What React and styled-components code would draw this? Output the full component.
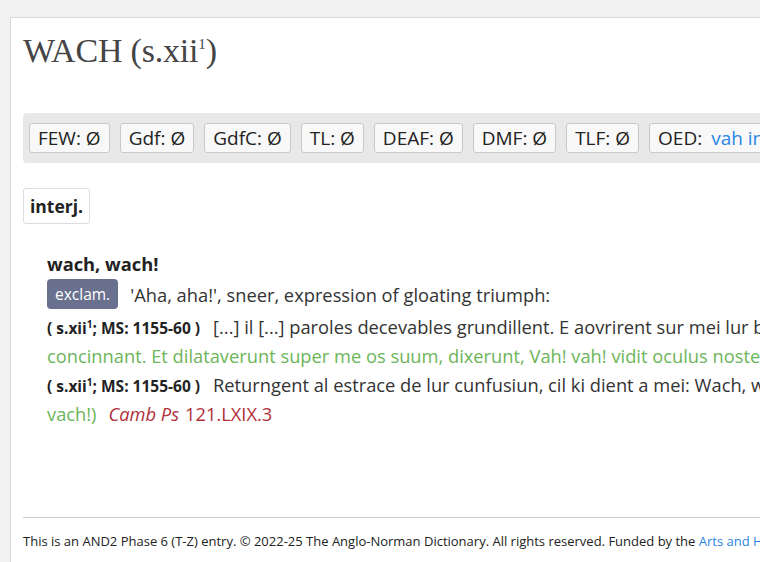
import styled, { createGlobalStyle } from 'styled-components';

const GlobalStyle = createGlobalStyle`
  html, body {
    margin: 0;
    background: #f1f1f1;
    overflow: hidden;
  }
  body {
    font-family: "Open Sans", "Noto Sans", "DejaVu Sans", sans-serif;
    color: #333;
  }
`;

const Page = styled.div`
  padding: 17px 0 0 10px;
`;

const Panel = styled.main`
  width: 1400px;
  min-height: 560px;
  background: #fff;
  border-top: 1px solid #d9d9d9;
  border-left: 1px solid #d9d9d9;
  padding: 0 12px;
`;

const Title = styled.h1`
  margin: 0;
  padding: 13px 0 0 0;
  height: 82px;
  font-family: "Liberation Serif", "DejaVu Serif", serif;
  font-weight: normal;
  font-size: 34px;
  line-height: 40px;
  color: #454545;
  letter-spacing: -0.2px;

  sup {
    font-size: 15px;
    vertical-align: 13px;
    line-height: 0;
  }
`;

const RefBar = styled.div`
  display: flex;
  gap: 10px;
  align-items: center;
  height: 50px;
  padding: 0 6px;
  background: #e8e8e8;
  border-radius: 4px;
`;

const RefButton = styled.span`
  display: inline-flex;
  align-items: center;
  height: 28px;
  padding: 0 8px;
  border: 1px solid #c9c9c9;
  border-radius: 3px;
  background: #f8f8f8;
  font-size: 19px;
  color: #222;
  white-space: nowrap;
`;

const RefLink = styled.a`
  color: #2b85e4;
  margin-left: 9px;
  text-decoration: none;
`;

const PosTag = styled.div`
  display: inline-block;
  margin-top: 25px;
  padding: 0 6px;
  height: 34px;
  line-height: 34px;
  border: 1px solid #ddd;
  border-radius: 3px;
  font-weight: bold;
  font-size: 17.5px;
  color: #222;
`;

const Sense = styled.section`
  padding: 26px 0 0 24px;
  font-size: 18.3px;
  line-height: 29px;
`;

const Headword = styled.div`
  font-weight: bold;
  color: #222;
  line-height: 28px;
`;

const Definition = styled.div`
  display: flex;
  align-items: center;
  gap: 12px;
  height: 32px;
  margin-bottom: 2px;
  color: #333;
`;

const Badge = styled.span`
  display: inline-block;
  padding: 0 8px;
  height: 30px;
  line-height: 30px;
  font-size: 15.5px;
  background: #69718f;
  color: #fff;
  border-radius: 4px;
`;

const Quote = styled.p`
  margin: 0;
  height: 29px;
  color: #333;
  white-space: nowrap;
`;

const Dating = styled.span`
  font-weight: bold;
  font-size: 15.5px;
  line-height: 1;
  color: #222;
  margin-right: 13px;

  sup {
    font-size: 10px;
    vertical-align: 6px;
    line-height: 0;
  }
`;

const Gloss = styled.span`
  color: #6cb55a;
`;

const Siglum = styled.span`
  color: #b0303a;
  margin-left: 12px;

  i {
    margin-right: 6px;
  }
`;

const Footer = styled.footer`
  margin-top: 89px;
  border-top: 1px solid #ccc;
  padding-top: 14px;
  font-size: 13px;
  color: #222;

  a {
    color: #2b85e4;
    text-decoration: none;
  }
`;

const refs = ['FEW', 'Gdf', 'GdfC', 'TL', 'DEAF', 'DMF', 'TLF'];

export default function App() {
  return (
    <Page>
      <GlobalStyle />
      <Panel>
        <Title>
          WACH (s.xii<sup>1</sup>)
        </Title>
        <RefBar>
          {refs.map((r) => (
            <RefButton key={r}>{r}: Ø</RefButton>
          ))}
          <RefButton>
            OED:<RefLink href="#">vah int.</RefLink>
          </RefButton>
        </RefBar>
        <PosTag>interj.</PosTag>
        <Sense>
          <Headword>wach, wach!</Headword>
          <Definition>
            <Badge>exclam.</Badge>
            <span>'Aha, aha!', sneer, expression of gloating triumph:</span>
          </Definition>
          <Quote>
            <Dating>
              ( s.xii<sup>1</sup>; MS: 1155-60 )
            </Dating>
            [...] il [...] paroles decevables grundillent. E aovrirent sur mei lur buche, e distrent: Wach, wach! <Gloss>(Et [...] dolose</Gloss>
          </Quote>
          <Quote>
            <Gloss>concinnant. Et dilataverunt super me os suum, dixerunt, Vah! vah! vidit oculus noster.)</Gloss>
            <Siglum>
              <i>Camb Ps</i>34.20-21
            </Siglum>
          </Quote>
          <Quote>
            <Dating>
              ( s.xii<sup>1</sup>; MS: 1155-60 )
            </Dating>
            Returngent al estrace de lur cunfusiun, cil ki dient a mei: Wach, wach! <Gloss>(Avertantur [...] qui dicunt mihi, Vah!</Gloss>
          </Quote>
          <Quote>
            <Gloss>vach!)</Gloss>
            <Siglum>
              <i>Camb Ps</i>121.LXIX.3
            </Siglum>
          </Quote>
        </Sense>
        <Footer>
          This is an AND2 Phase 6 (T-Z) entry. © 2022-25 The Anglo-Norman Dictionary. All rights reserved. Funded by the{' '}
          <a href="#">Arts and Humanities Research Council</a>.
        </Footer>
      </Panel>
    </Page>
  );
}
